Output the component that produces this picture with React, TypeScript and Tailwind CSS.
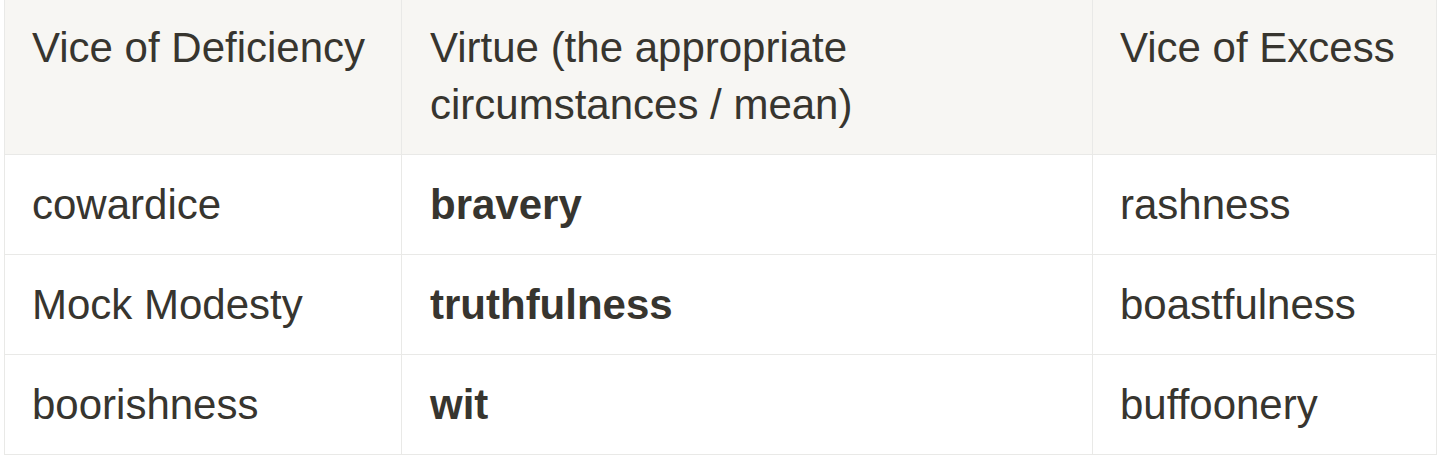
import React from "react";

const rows: [string, string, string][] = [
  ["cowardice", "bravery", "rashness"],
  ["Mock Modesty", "truthfulness", "boastfulness"],
  ["boorishness", "wit", "buffoonery"],
];

export default function App() {
  return (
    <div
      className="w-[1440px] h-[460px] bg-white text-[#37352f] text-[42px] leading-[57px]"
      style={{ fontFamily: '"Liberation Sans", Arial, sans-serif' }}
    >
      <div className="ml-[4px] w-[1433px] border-r border-[#e9e9e7]">
        <div className="grid grid-cols-[397px_691px_344px] bg-[#f7f6f3] border-b border-[#e9e9e7]">
          <div className="border-l border-[#e9e9e7] px-[27px] pt-[19px] pb-[21px]">Vice of Deficiency</div>
          <div className="border-l border-[#e9e9e7] px-[28px] pt-[19px] pb-[21px]">
            Virtue (the appropriate circumstances / mean)
          </div>
          <div className="border-l border-[#e9e9e7] px-[27px] pt-[19px] pb-[21px]">Vice of Excess</div>
        </div>
        {rows.map((r) => (
          <div key={r[0]} className="grid grid-cols-[397px_691px_344px] border-b border-[#e9e9e7]">
            <div className="border-l border-[#e9e9e7] px-[27px] py-[21px]">{r[0]}</div>
            <div className="border-l border-[#e9e9e7] px-[28px] py-[21px] font-bold">{r[1]}</div>
            <div className="border-l border-[#e9e9e7] px-[27px] py-[21px]">{r[2]}</div>
          </div>
        ))}
      </div>
    </div>
  );
}
